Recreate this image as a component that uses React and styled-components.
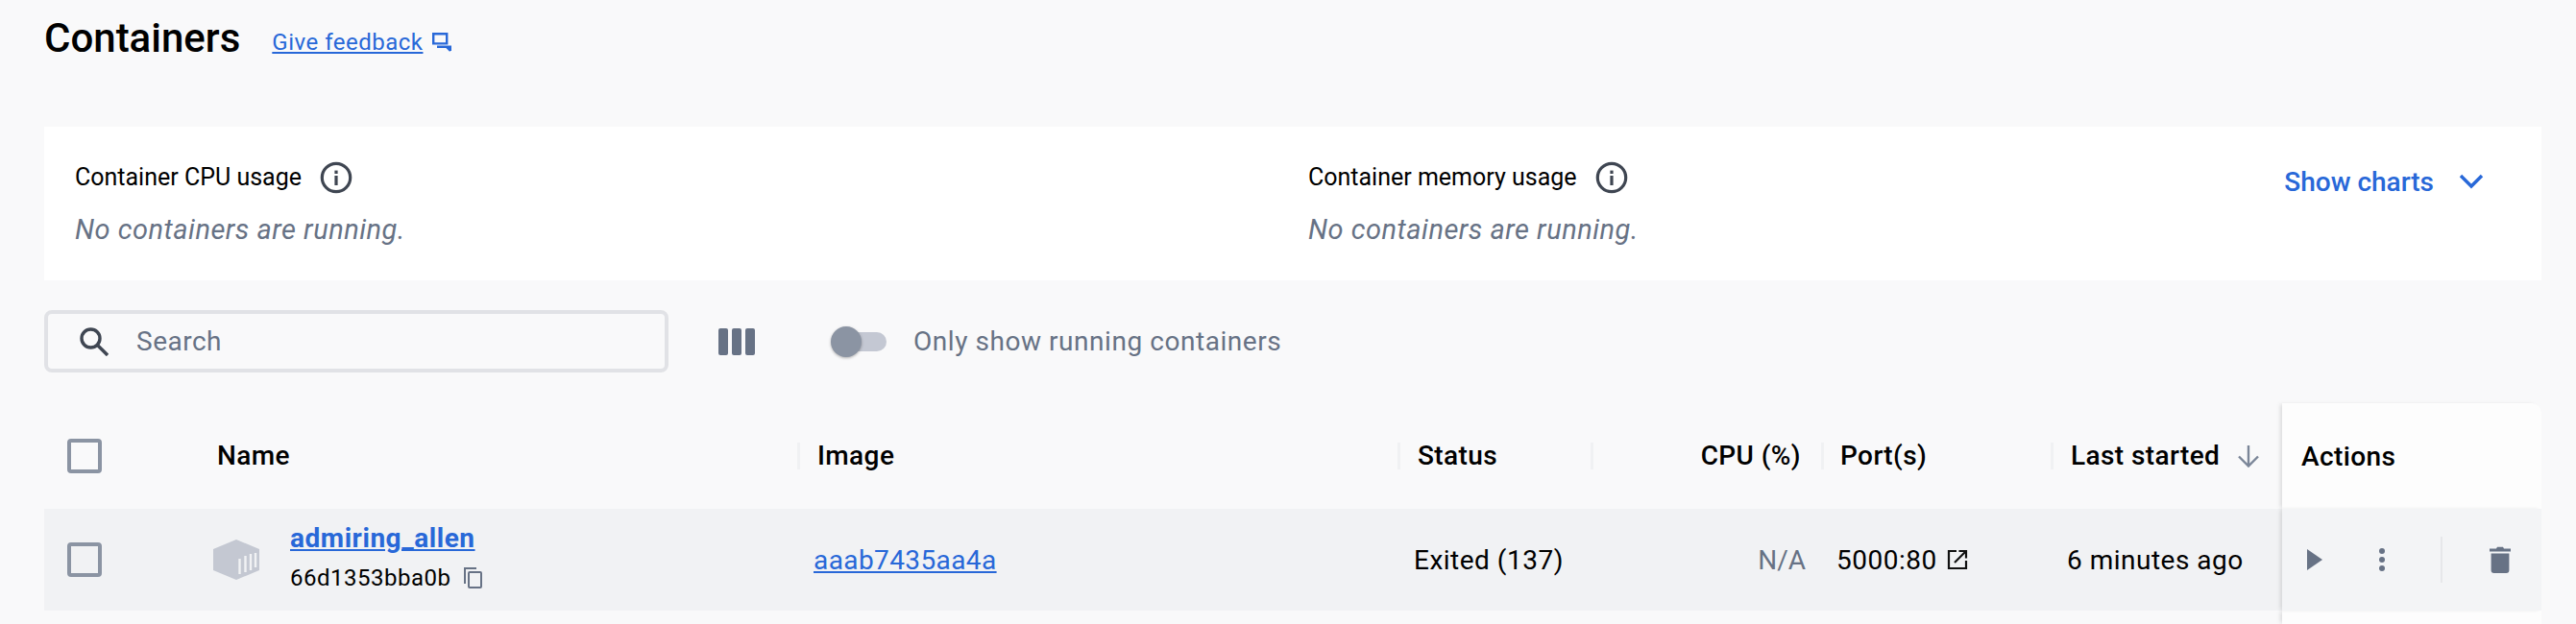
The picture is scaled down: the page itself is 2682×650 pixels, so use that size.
import React from "react";
import styled, { createGlobalStyle } from "styled-components";

const Global = createGlobalStyle`
  html, body { margin: 0; padding: 0; background: #f9f9fa; height: 650px; overflow: hidden; }
  body { font-family: Roboto, "Liberation Sans", sans-serif; color: #000; }
  * { box-sizing: border-box; }
`;
const Page = styled.div`
  width: 2682px; height: 650px; padding: 0 36px 0 46px; overflow: hidden;
`;
const TitleBar = styled.header`
  display: flex; align-items: center; height: 80px; gap: 33px;
`;
const Title = styled.h1`
  margin: 0; font-size: 42px; font-weight: 500; line-height: 80px;
`;
const Feedback = styled.a`
  display: flex; align-items: center; gap: 10px; color: #2868d8; font-size: 24px; letter-spacing: .5px; padding-top: 8px;
  span { text-decoration: underline; }
`;
const StatsCard = styled.section`
  margin-top: 52px; height: 160px; background: #fff; display: grid;
  grid-template-columns: 1284px 1fr auto; padding: 36px 32px 0 32px;
`;
const Stat = styled.div`display: flex; flex-direction: column; gap: 20px;`;
const StatLabel = styled.div`
  display: flex; align-items: center; gap: 19px; font-size: 25px; line-height: 34px;
`;
const Muted = styled.div`
  font-size: 29px; font-style: italic; line-height: 34px; color: #677285; letter-spacing: .5px;
`;
const ShowCharts = styled.div`
  display: flex; align-items: center; gap: 26px; color: #2868d8; font-size: 28px; font-weight: 500; height: 40px; margin-top: 1px; padding-right: 28px;
`;
const Toolbar = styled.div`
  display: flex; align-items: center; margin-top: 31px; height: 65px;
`;
const SearchBox = styled.div`
  width: 650px; height: 65px; border: 4px solid #e1e2e6; border-radius: 8px; display: flex; align-items: center;
  padding-left: 33px; gap: 29px; color: #677285; font-size: 28px; letter-spacing: .5px;
`;
const ColumnsBtn = styled.div`margin-left: 52px; display: flex;`;
const Toggle = styled.div`
  margin-left: 79px; width: 58px; height: 32px; position: relative; display: flex; align-items: center;
`;
const Track = styled.div`width: 52px; height: 20px; margin-left: 6px; border-radius: 10px; background: #c4c8d3;`;
const Knob = styled.div`
  position: absolute; left: 0; top: 0; width: 32px; height: 32px; border-radius: 50%; background: #8b94a3; box-shadow: 0 1px 3px rgba(0,0,0,.3);
`;
const ToggleLabel = styled.span`margin-left: 28px; font-size: 28px; color: #677285; letter-spacing: .55px;`;
const Table = styled.div`margin-top: 32px; width: 2600px;`;
const columns = "164px 620px 625px 201px 240px 239px 241px 270px";
const HeadRow = styled.div`
  display: grid; grid-template-columns: ${columns}; height: 110px; align-items: center;
`;
const DataRow = styled.div`
  display: grid; grid-template-columns: ${columns}; height: 106px; align-items: center; background: #f1f2f4;
`;
const HeadCell = styled.div`
  font-size: 28px; font-weight: 500; letter-spacing: .4px; height: 28px; line-height: 28px; display: flex; align-items: center; gap: 18px;
  padding-left: ${p => p.$pad ?? 16}px;
  border-left: ${p => (p.$sep ? "3px solid #f0f1f3" : "none")};
  justify-content: ${p => (p.$right ? "flex-end" : "flex-start")};
  padding-right: ${p => (p.$right ? 21 : 0)}px;
`;
const Check = styled.div`
  width: 36px; height: 36px; border: 4px solid #8b94a3; border-radius: 4px; margin-left: 24px;
`;
const ActionsHead = styled.div`
  height: 110px; background: #fdfdfd; border-radius: 0 10px 0 0; font-size: 28px; font-weight: 500; letter-spacing: .4px;
  display: flex; align-items: center; padding-left: 20px; box-shadow: -3px 0 4px -1px rgba(0,0,0,.12); position: relative;
`;
const NameCell = styled.div`display: flex; align-items: center; gap: 32px; padding-left: 12px;`;
const NameStack = styled.div`display: flex; flex-direction: column; gap: 11px; position: relative; top: -2px;`;
const NameLink = styled.a`font-size: 28px; font-weight: 700; line-height: 30px; letter-spacing: .55px; color: #2868d8; text-decoration: underline;`;
const IdLine = styled.div`display: flex; align-items: center; gap: 14px; font-size: 24px; line-height: 30px; letter-spacing: .5px;`;
const ImageLink = styled.a`font-size: 28px; color: #2868d8; text-decoration: underline; padding-left: 17px; letter-spacing: .4px;`;
const BodyCell = styled.div`
  font-size: 28px; letter-spacing: ${p => (p.$muted ? 0 : ".5px")}; display: flex; align-items: center; gap: 10px;
  padding-left: ${p => p.$pad ?? 17}px; padding-right: ${p => (p.$right ? 16 : 0)}px;
  justify-content: ${p => (p.$right ? "flex-end" : "flex-start")};
  color: ${p => (p.$muted ? "#677285" : "#000")};
`;
const ActionsCell = styled.div`
  height: 106px; background: #f3f4f6; display: flex; align-items: center; padding-left: 26px; position: relative;
  box-shadow: -3px 0 4px -1px rgba(0,0,0,.12);
`;
const ActionsTail = styled.div`
  margin-left: auto; width: 270px; height: 14px; background: #fdfdfd; box-shadow: -3px 0 4px -1px rgba(0,0,0,.12);
`;
const Divider = styled.div`width: 2px; height: 48px; background: #e6e7ea; margin-left: 58px;`;
const PlayIcon = styled.svg`flex: none;`;
const DotsIcon = styled.svg`flex: none; margin-left: 59px;`;
const TrashIcon = styled.svg`flex: none; margin-left: 49px;`;

const Info = () => (
  <svg width="34" height="34" viewBox="0 0 34 34" fill="none">
    <circle cx="17" cy="17" r="14.7" stroke="#3f4652" strokeWidth="3.2" />
    <rect x="15.4" y="15" width="3.2" height="10" fill="#3f4652" />
    <rect x="15.4" y="9.6" width="3.2" height="3.4" fill="#3f4652" />
  </svg>
);
const FeedbackIcon = () => (
  <svg width="20" height="20" viewBox="0 0 20 20" fill="none" stroke="#2868d8" strokeWidth="2.4">
    <path d="M1.2 1.2H15.2V11.4H1.2Z" />
    <path d="M5 14.8H18.8V19" />
    <path d="M15 15l4 4" />
  </svg>
);
const ContainerIcon = () => (
  <svg width="48" height="42" viewBox="0 0 48 42">
    <path d="M24 0 48 10V32L24 42 0 32V10Z" fill="#c4c8d2" />
    <g stroke="#f1f2f4" strokeWidth="2.4">
      <path d="M27.5 36V20" /><path d="M33.5 34V17" /><path d="M39 32V15" /><path d="M44 29V14" />
    </g>
  </svg>
);
const Copy = () => (
  <svg width="19" height="22" viewBox="0 0 19 22" fill="none" stroke="#677285" strokeWidth="2">
    <path d="M1 17V1H13" />
    <rect x="5" y="5" width="13" height="16" rx="1" />
  </svg>
);

export default function App() {
  return (
    <Page>
      <Global />
      <TitleBar>
        <Title>Containers</Title>
        <Feedback><span>Give feedback</span><FeedbackIcon /></Feedback>
      </TitleBar>
      <StatsCard>
        <Stat>
          <StatLabel>Container CPU usage <Info /></StatLabel>
          <Muted>No containers are running.</Muted>
        </Stat>
        <Stat>
          <StatLabel>Container memory usage <Info /></StatLabel>
          <Muted>No containers are running.</Muted>
        </Stat>
        <ShowCharts>
          Show charts
          <svg width="26" height="16" viewBox="0 0 26 16" fill="none" stroke="#2868d8" strokeWidth="3.4"><path d="M2 2l11 11L24 2" /></svg>
        </ShowCharts>
      </StatsCard>
      <Toolbar>
        <SearchBox>
          <svg width="30" height="30" viewBox="0 0 30 30" fill="none" stroke="#3f4652" strokeWidth="3.4"><circle cx="11.5" cy="11.5" r="9.5" /><path d="M18.5 18.5L29 29" /></svg>
          Search
        </SearchBox>
        <ColumnsBtn>
          <svg width="38" height="28" viewBox="0 0 38 28" fill="#677285"><rect width="10" height="28" rx="2" /><rect x="14" width="10" height="28" rx="2" /><rect x="28" width="10" height="28" rx="2" /></svg>
        </ColumnsBtn>
        <Toggle><Track /><Knob /></Toggle>
        <ToggleLabel>Only show running containers</ToggleLabel>
      </Toolbar>
      <Table>
        <HeadRow>
          <Check />
          <HeadCell>Name</HeadCell>
          <HeadCell $sep $pad={18}>Image</HeadCell>
          <HeadCell $sep $pad={18}>Status</HeadCell>
          <HeadCell $sep $right $pad={18}>CPU (%)</HeadCell>
          <HeadCell $sep $pad={17}>Port(s)</HeadCell>
          <HeadCell $sep $pad={18}>Last started
            <svg width="24" height="24" viewBox="0 0 24 24" fill="none" stroke="#7b8698" strokeWidth="2.4"><path d="M12 1V22.5M2 12.5l10 10 10-10" /></svg>
          </HeadCell>
          <ActionsHead>Actions</ActionsHead>
        </HeadRow>
        <DataRow>
          <Check />
          <NameCell>
            <ContainerIcon />
            <NameStack>
              <NameLink>admiring_allen</NameLink>
              <IdLine>66d1353bba0b <Copy /></IdLine>
            </NameStack>
          </NameCell>
          <ImageLink>aaab7435aa4a</ImageLink>
          <BodyCell>Exited (137)</BodyCell>
          <BodyCell $right $muted>N/A</BodyCell>
          <BodyCell $pad={16}>5000:80
            <svg width="22" height="22" viewBox="0 0 22 22" fill="none" stroke="#111" strokeWidth="2.2"><path d="M10 2H2V20H20V12" /><path d="M8 14L20 2M12.5 2H20V9.5" /></svg>
          </BodyCell>
          <BodyCell>6 minutes ago</BodyCell>
          <ActionsCell>
            <PlayIcon width="16" height="22" viewBox="0 0 16 22" fill="#677285"><path d="M0 0L16 11 0 22Z" /></PlayIcon>
            <DotsIcon width="6" height="24" viewBox="0 0 6 24" fill="#677285"><circle cx="3" cy="3" r="3" /><circle cx="3" cy="12" r="3" /><circle cx="3" cy="21" r="3" /></DotsIcon>
            <Divider />
            <TrashIcon width="22" height="28" viewBox="0 0 22 28" fill="#677285"><path d="M0 2.6H7L8 .8H14L15 2.6H22V5.4H0Z" /><path d="M1.6 7.4H20.4V25a3 3 0 0 1-3 3H4.6a3 3 0 0 1-3-3Z" /></TrashIcon>
          </ActionsCell>
        </DataRow>
        <ActionsTail />
      </Table>
    </Page>
  );
}
